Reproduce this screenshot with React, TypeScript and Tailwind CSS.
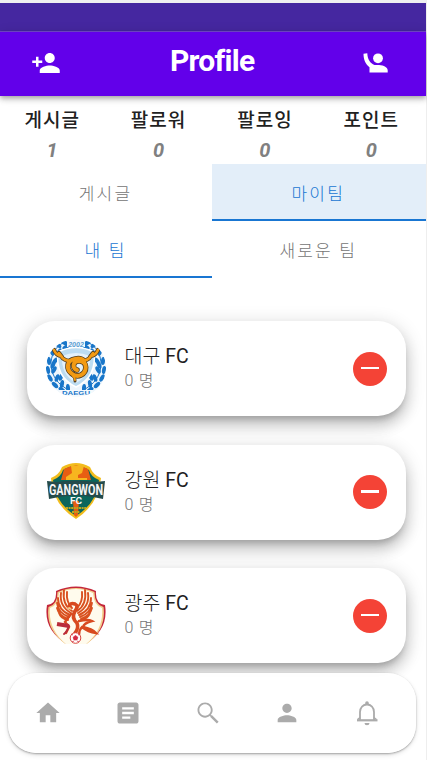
import React from 'react';

const ICONS = {
  personAdd:
    'M15 12c2.21 0 4-1.79 4-4s-1.79-4-4-4-4 1.79-4 4 1.79 4 4 4zm-9-2V7H4v3H1v2h3v3h2v-3h3v-2H6zm9 4c-2.67 0-8 1.34-8 4v2h16v-2c0-2.66-5.33-4-8-4z',
  home: 'M10 20v-6h4v6h5v-8h3L12 3 2 12h3v8z',
  article:
    'M19 3H5c-1.1 0-2 .9-2 2v14c0 1.1.9 2 2 2h14c1.1 0 2-.9 2-2V5c0-1.1-.9-2-2-2zm-5 14H7v-2h7v2zm3-4H7v-2h10v2zm0-4H7V7h10v2z',
  search:
    'M15.5 14h-.79l-.28-.27C15.41 12.59 16 11.11 16 9.5 16 5.91 13.09 3 9.5 3S3 5.91 3 9.5 5.91 16 9.5 16c1.61 0 3.09-.59 4.23-1.57l.27.28v.79l5.6 5.6L21.1 19.6l-5.6-5.6zm-6 .4C6.8 14.4 4.6 12.2 4.6 9.5S6.8 4.6 9.5 4.6s4.9 2.2 4.9 4.9-2.2 4.9-4.9 4.9z',
  person:
    'M12 12c2.21 0 4-1.79 4-4s-1.79-4-4-4-4 1.79-4 4 1.79 4 4 4zm0 2c-2.67 0-8 1.34-8 4v2h16v-2c0-2.66-5.33-4-8-4z',
};

function Icon({ d, className }: { d: string; className: string }) {
  return (
    <svg viewBox="0 0 24 24" fill="currentColor" className={className}>
      <path d={d} />
    </svg>
  );
}

function BellIcon() {
  return (
    <svg viewBox="0 0 28 28" fill="none" stroke="currentColor" className="size-7">
      <path d="M7 21.500V13c0-4.500 3-7.500 7-7.500s7 3 7 7.500v8.500" strokeWidth="1.800" />
      <path d="M4 21.300h20.500" strokeWidth="2.200" />
      <path d="M4.500 20.500L7 18.500M23.500 20.500L21 18.500" strokeWidth="1.400" />
      <path d="M12.200 5.500V4a1.800 1.800 0 0 1 3.600 0v1.500zM11.500 24h5a2.500 2.200 0 0 1-5 0z" fill="currentColor" stroke="none" />
    </svg>
  );
}

function WavingIcon() {
  return (
    <svg viewBox="0 0 26 20" fill="#fff" className="h-5 w-[26px]">
      <circle cx="15" cy="5.300" r="4.900" />
      <path d="M.5.8L4.300.200C4.500 6.200 7.200 10.300 11.500 12h4.500c5 .3 8.700 2.400 8.700 5.200v2.300H6.500V14.200C2.700 11.500.500 7 .500.800z" />
    </svg>
  );
}

const LEAVES = [
  [12, 6, -50], [6, 13, -20], [13, 13, 30], [3, 22, -5], [9, 22, 35], [2, 31, -10],
  [8, 31, 30], [4, 39, -30], [11, 39, 20], [9, 46, -45], [16, 45, 10], [16, 51, -55], [22, 49, -5],
  [19, 4, -70], [7, 26, 20], [15, 38, 20], [20, 8, 60],
];

function DaeguLogo() {
  const branch = (
    <g fill="#1976c9">
      <path d="M17 4C3 11 0 33 15 46l10 7" fill="none" stroke="#1976c9" strokeWidth="1" />
      {LEAVES.map(([x, y, r]) => (
        <ellipse key={`${x}-${y}`} cx={x} cy={y} rx="2" ry="4" transform={`rotate(${r} ${x} ${y})`} />
      ))}
    </g>
  );
  return (
    <svg viewBox="0 0 60 58" className="mb-[2px] h-[58px] w-[60px]">
      <clipPath id="daegu"><rect x="0" y=".5" width="60" height="57" rx="28" /></clipPath>
      <g clipPath="url(#daegu)">
        <path d="M0 0h60v58H0z" fill="#eef6fc" />
        {branch}
        <g transform="translate(60 0) scale(-1 1)">{branch}</g>
        <path d="M12 13q18-9 36 0 3 25-18 35Q9 38 12 13z" fill="#bcdcf1" stroke="#fff" strokeWidth="1.500" />
        <path d="M16 17q14-6 28 0 1 19-14 27Q15 36 16 17z" fill="#e4f1fa" />
        <g fill="none" stroke="#4f3d22" strokeLinecap="round">
          <path d="M25 22q-7 0-10-5-5-1-7-6M16 18l-3-4M35 22q7 0 10-5 5-1 7-6M44 18l3-4" strokeWidth="4.300" />
          <path d="M38 22c-3-4-15-3-16 4s7 13 13 10 7-13-1-14-8 8-3 9" strokeWidth="5.500" />
          <path d="M27 37q2 1 2 5" strokeWidth="3" />
        </g>
        <g fill="none" stroke="#f29a14" strokeLinecap="round">
          <path d="M25 22q-7 0-10-5-5-1-7-6M16 18l-3-4M35 22q7 0 10-5 5-1 7-6M44 18l3-4" strokeWidth="2.600" />
          <path d="M38 22c-3-4-15-3-16 4s7 13 13 10 7-13-1-14-8 8-3 9" strokeWidth="4" />
          <path d="M27 37q2 1 2 4" strokeWidth="2" />
        </g>
        <path d="M21 1h18v7H21zM13 51h34v8H13z" fill="#f4f9fd" />
        <text x="30" y="8" textAnchor="middle" fontSize="7" fontWeight="700" fontStyle="italic" fill="#5a9dd2" fontFamily="Liberation Sans, sans-serif">2002</text>
        <text x="30" y="56" textAnchor="middle" fontSize="6" textLength="28" lengthAdjust="spacingAndGlyphs" fontWeight="700" fill="#1976c9" fontFamily="Liberation Sans, sans-serif">DAEGU</text>
      </g>
    </svg>
  );
}

function GangwonLogo() {
  return (
    <svg viewBox="0 0 60 58" className="mb-[2px] h-[58px] w-[60px]">
      <path d="M16 5Q30-3 44 5q3 8 11 11-2 26-25 41Q6 42 5 16q8-3 11-11z" fill="#f2bd1d" />
      <path d="M17 8Q30 0 43 8q2 7 10 10-2 23-23 36Q9 41 7 18q8-3 10-10z" fill="#0b665c" />
      <path d="M18 7q12-7 24 0l3 11H15z" fill="#e85d12" />
      <path d="M25 4h13l-2 7-4 2v3h9v2H20v-3l6-4z" fill="#f7b51f" />
      <path d="M27 39h6l-1 14-2 2-2-2z" fill="#e85d12" />
      <path d="M1 19l10 1q19-3 38 0l10-1-2 18-10-2q-17-3-34 0l-10 2z" fill="#244b4b" />
      <g textAnchor="middle" fontWeight="700" fill="#f5f5f5" fontFamily="Roboto, sans-serif">
        <text x="30" y="32.500" textLength="54" lengthAdjust="spacingAndGlyphs" fontSize="15">GANGWON</text>
        <text x="30" y="42" textLength="12" lengthAdjust="spacingAndGlyphs" fontSize="9">FC</text>
      </g>
      <path d="M20 46h20M26 50h8" stroke="#b9a721" strokeWidth="2" strokeDasharray="2 .6" />
    </svg>
  );
}

function GwangjuLogo() {
  const wing = (
    <path
      d="M18 4Q16 19 26 25M15 7q-2 13 10 20M12 12q0 12 12 17M11 17q1 10 12 14M11 22q2 8 11 11M13 27q2 6 9 7M21 6q-1 10 5 16"
      fill="none"
      stroke="#d9501f"
      strokeWidth="1.900"
      strokeLinecap="round"
    />
  );
  return (
    <svg viewBox="0 0 60 58" className="mb-[2px] h-[58px] w-[60px]">
      <path d="M10 5Q30-4 50 5q-1 13 9 14 4 25-20 39H21Q-3 44 1 19 11 18 10 5z" fill="#c4263a" />
      <path d="M11.500 6Q30-2 48.500 6q0 13 9 15 3 22-16 36.500h-23Q-.5 43 2.500 21q9-2 9-15z" fill="#f3cf8e" />
      <path d="M13 7Q30-1 47 7q1 13 9 15 2 21-16 36H20Q2 43 4 22q8-2 9-15z" fill="#fffbed" />
      {wing}
      <g transform="translate(57 0) scale(-1 1)">{wing}</g>
      <g fill="none" stroke="#d84a20" strokeLinecap="round">
        <path d="M23 21q1-5 6-3 4 2 0 7-4 7 2 12 2 5-2 10" strokeWidth="3.600" />
        <path d="M25 28l-6 8 4 5-3 6M33 35q9-2 13 0-8 2-9 6 9 2 13 6-8-1-14-6-3 3-3 8" strokeWidth="2.400" />
        <path d="M11 38l12 2" stroke="#b92b3a" strokeWidth="4" strokeLinecap="butt" />
        <path d="M23 40q-2 6-5 8" stroke="#b92b3a" strokeWidth="2" />
      </g>
      <path d="M24 21l-4 1 5 2z" fill="#f3cf8e" />
      <circle cx="29.500" cy="52" r="5.300" fill="#fff" stroke="#d8443d" />
      <path d="M29.500 49.500l2.300 1.700-.9 2.700H28l-.8-2.700zM25 48l2 1M34 48l-2 1M26 56l2-1M33 56l-2-1" fill="#d32b43" stroke="#d32b43" strokeWidth=".8" />
    </svg>
  );
}

const STATS = [
  ['게시글', '1'],
  ['팔로워', '0'],
  ['팔로잉', '0'],
  ['포인트', '0'],
];

const TEAMS = [
  { city: '대구', logo: <DaeguLogo /> },
  { city: '강원', logo: <GangwonLogo /> },
  { city: '광주', logo: <GwangjuLogo /> },
];

function Tab({ label, className }: { label: string; className: string }) {
  return (
    <div className={`flex h-[57px] items-center justify-center border-b-2 pt-[6px] pr-px text-[17px] font-light tracking-[2.2px] ${className}`}>
      {label}
    </div>
  );
}

export default function App() {
  return (
    <div className="h-[760px] w-[427px] overflow-hidden bg-white font-['Roboto','Noto_Sans_CJK_KR',sans-serif]">
      <div className="flex h-full w-[426.5px] flex-col border-r border-[#eeeeee]">
        <div className="h-[3px] shrink-0 bg-[#efeff1]" />
        <div className="h-7 shrink-0 bg-[#4527a0]" />
        <header className="relative flex h-[65px] shrink-0 items-center justify-between border-t border-[#6b42bd] bg-[#6200ea] pr-[36px] pb-[2px] pl-[31px] shadow-[0_2px_4px_-1px_rgba(0,0,0,.2),0_4px_5px_rgba(0,0,0,.14),0_1px_10px_rgba(0,0,0,.12)]">
          <Icon d={ICONS.personAdd} className="size-[30px] text-white" />
          <h1 className="pb-[6px] text-[30px] font-bold tracking-[-0.7px] text-white">Profile</h1>
          <WavingIcon />
        </header>

        <div className="grid h-[68px] shrink-0 grid-cols-4 text-center">
          {STATS.map(([label, value]) => (
            <div key={label} className="pr-[2px] pt-[11px]">
              <div className="h-[27px] text-[19px] leading-7 font-medium tracking-[1px] text-[#212121]">{label}</div>
              <div className="h-7 text-[20px] leading-8 font-bold text-[#808080] italic">{value}</div>
            </div>
          ))}
        </div>

        <div className="grid shrink-0 grid-cols-[212px_1fr]">
          <Tab label="게시글" className="border-transparent text-[#757575]" />
          <Tab label="마이팀" className="border-[#1976d2] bg-[#e3eef9] text-[#1976d2]" />
          <Tab label="내 팀" className="border-[#1976d2] text-[#1976d2]" />
          <Tab label="새로운 팀" className="border-transparent text-[#757575]" />
        </div>

        <main className="flex shrink-0 flex-col gap-[28.5px] pt-[43px] pr-5 pl-[26.5px]">
          {TEAMS.map((team) => (
            <section
              key={team.city}
              className="flex h-[95px] items-center rounded-[28px] bg-white pr-[19px] pl-[19px] shadow-[0_6px_6px_-3px_rgba(0,0,0,.2),0_10px_14px_1px_rgba(0,0,0,.14),0_4px_18px_3px_rgba(0,0,0,.12)]"
            >
              {team.logo}
              <div className="ml-[19px] flex-1">
                <div className="h-[25px] text-[19.500px] leading-[25px] font-light text-[#212121]">
                  {team.city} <span className="font-normal">FC</span>
                </div>
                <div className="h-6 text-[16px] leading-6 font-light tracking-[.8px] text-[#757575]">0 명</div>
              </div>
              <button className="flex size-[34px] items-center justify-center rounded-full bg-[#f44336]">
                <span className="mb-px h-[2.5px] w-[18px] bg-white" />
              </button>
            </section>
          ))}
        </main>

        <nav className="mt-[10px] ml-2 flex h-20 w-[408px] shrink-0 items-center justify-between rounded-[28px] bg-white/95 pr-[35px] pl-[26px] text-[#ababab] shadow-[0_1px_2px_rgba(0,0,0,.3),0_2px_5px_rgba(0,0,0,.12)]">
          <Icon d={ICONS.home} className="size-7" />
          <Icon d={ICONS.article} className="size-7" />
          <Icon d={ICONS.search} className="size-7" />
          <Icon d={ICONS.person} className="size-7" />
          <BellIcon />
        </nav>
      </div>
    </div>
  );
}
